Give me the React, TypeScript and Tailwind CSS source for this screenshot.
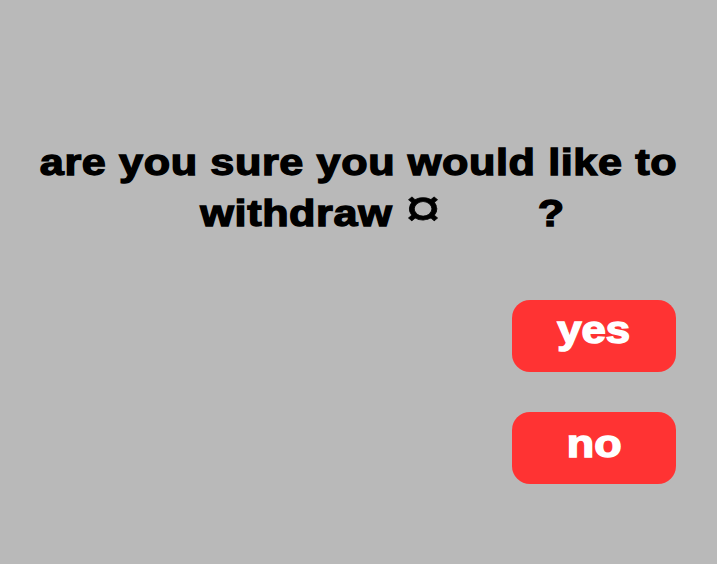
export default function App() {
  const font = { fontFamily: '"Liberation Sans", Arial, sans-serif' };
  return (
    <div className="w-[717px] h-[564px] bg-[#b9b9b9] flex flex-col overflow-hidden" style={font}>
      <div className="pt-[137px] text-center text-black font-bold text-[36px] leading-[51px] [-webkit-text-stroke:1.3px_black] tracking-[0.5px] scale-x-[1.2]">
        <div>are you sure you would like to</div>
        <div className="whitespace-pre pl-[40px]">
          {"withdraw "}
          <span className="inline-block text-[54px] leading-[34px] font-normal [-webkit-text-stroke:0.7px_black] tracking-normal">¤</span>
          {"       "}
          <span className="inline-block w-[7px]"></span>
          {"?"}
        </div>
      </div>
      <div className="mt-[61px] flex flex-col items-end pr-[41px] gap-[40px]">
        <button className="w-[164px] h-[72px] rounded-[18px] bg-[#ff3333] text-white font-bold text-[38px] leading-none [-webkit-text-stroke:1.5px_white] pb-[12px]">
          <span className="inline-block scale-x-[1.15]">yes</span>
        </button>
        <button className="w-[164px] h-[72px] rounded-[18px] bg-[#ff3333] text-white font-bold text-[38px] leading-none [-webkit-text-stroke:1.5px_white] pb-[8px]">
          <span className="inline-block scale-x-[1.18]">no</span>
        </button>
      </div>
    </div>
  );
}
